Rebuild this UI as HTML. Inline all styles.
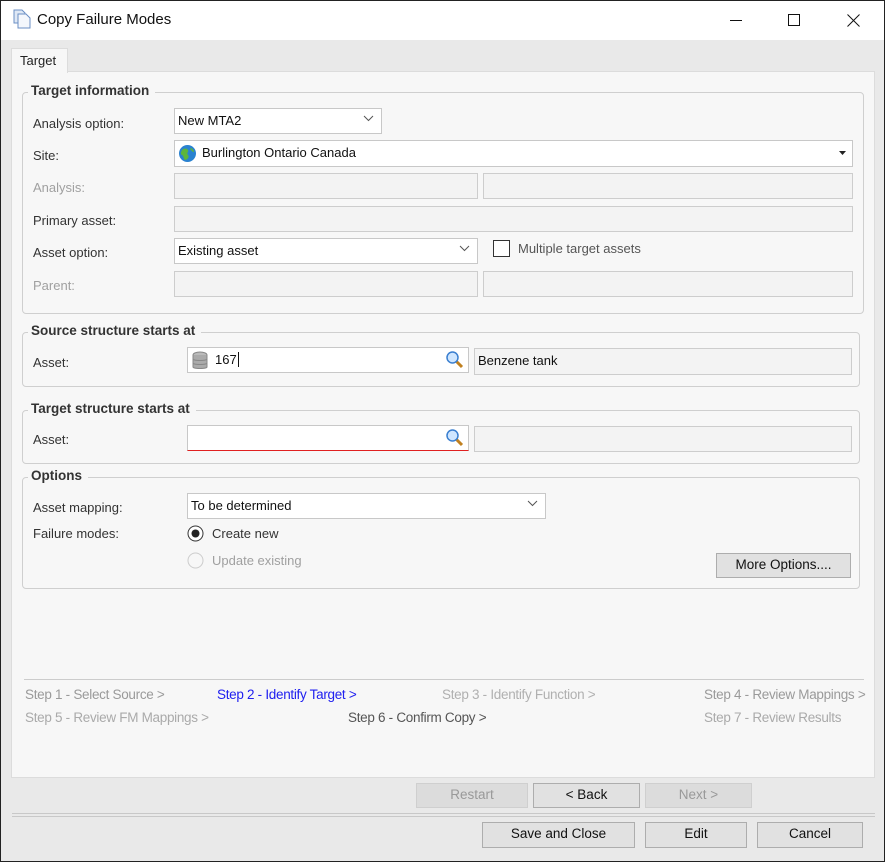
<!DOCTYPE html>
<html><head><meta charset="utf-8"><style>
*{box-sizing:border-box;margin:0;padding:0}
body{width:885px;height:862px;overflow:hidden;background:#e9e9e9;font-family:"Liberation Sans",sans-serif;font-size:13px;color:#222;position:relative}
.a{position:absolute}
.win{left:0;top:0;width:885px;height:862px;border:1px solid #222}
.title{left:1px;top:1px;width:883px;height:39px;background:#fff}
.panel{left:11px;top:71px;width:864px;height:707px;background:#f7f7f7;border:1px solid #dcdcdc}
.tab{left:11px;top:48px;width:57px;height:25px;background:#f7f7f7;border:1px solid #dcdcdc;border-bottom:none;padding:4px 0 0 8px;font-size:13px}
.grp{border:1px solid #cfcfcf;border-radius:4px}
.leg{font-weight:bold;background:#f7f7f7;padding:0 6px 0 3px;font-size:13.5px;color:#333}
.lbl{font-size:13px;color:#333}
.dis{color:#a0a0a0}
.in{background:#fff;border:1px solid #c8c8c8;padding:3px 3px;font-size:13px;color:#111;line-height:17px}
.ro{background:#f3f3f3;border:1px solid #cdcdcd}
.chev{position:absolute;right:6px;top:3px;width:13px;height:13px}
.step{font-size:13.5px;color:#9a9a9a;letter-spacing:-0.3px}
.btn{border:1px solid #adadad;background:#e1e1e1;text-align:center;font-size:13.5px;line-height:22px;color:#111}
.bd{color:#999;background:#dcdcdc;border-color:#cfcfcf}
</style></head><body>
<div class="a win"></div>
<div class="a title"></div>
<svg class="a" style="left:12px;top:9px" width="20" height="20" viewBox="0 0 20 20"><path d="M2 1h8l3 3v10H2z" fill="#dfe8f5" stroke="#6b8fc4"/><path d="M6 5h8l4 4v10H6z" fill="#f4f7fc" stroke="#6b8fc4"/></svg>
<div class="a" style="left:37px;top:11px;font-size:15px;color:#111">Copy Failure Modes</div>
<div class="a" style="left:730px;top:20px;width:12px;height:1px;background:#111"></div>
<div class="a" style="left:788px;top:14px;width:12px;height:12px;border:1px solid #111"></div>
<svg class="a" style="left:847px;top:14px" width="13" height="13"><path d="M0.5 0.5L12.5 12.5M12.5 0.5L0.5 12.5" stroke="#111"/></svg>

<div class="a panel"></div>
<div class="a tab">Target</div>

<!-- group 1 -->
<div class="a grp" style="left:22px;top:92px;width:842px;height:222px"></div>
<div class="a leg" style="left:28px;top:83px">Target information</div>
<div class="a lbl" style="left:33px;top:116px">Analysis option:</div>
<div class="a in" style="left:174px;top:108px;width:208px;height:26px">New MTA2<svg class="chev" viewBox="0 0 13 13"><path d="M2 4l4.5 4.5L11 4" fill="none" stroke="#555"/></svg></div>
<div class="a lbl" style="left:33px;top:148px">Site:</div>
<div class="a in" style="left:174px;top:140px;width:679px;height:27px;padding-left:27px">Burlington Ontario Canada</div>
<svg class="a" style="left:178px;top:144px" width="19" height="19" viewBox="0 0 19 19"><circle cx="9.5" cy="9.5" r="8.5" fill="#2a82d0"/><path d="M4 6c2-2 5-2 6 0s-2 3 0 5-1 5-3 5c-2-2-1-4-3-5s-1-3 0-5zM12 4c2 0 4 2 4 4-2 0-3-2-4-4z" fill="#5cb63c"/></svg>
<svg class="a" style="left:839px;top:151px" width="8" height="5"><path d="M0 0h7L3.5 4z" fill="#222"/></svg>
<div class="a lbl dis" style="left:33px;top:180px">Analysis:</div>
<div class="a in ro" style="left:174px;top:173px;width:304px;height:26px"></div>
<div class="a in ro" style="left:483px;top:173px;width:370px;height:26px"></div>
<div class="a lbl" style="left:33px;top:213px">Primary asset:</div>
<div class="a in ro" style="left:174px;top:206px;width:679px;height:26px"></div>
<div class="a lbl" style="left:33px;top:245px">Asset option:</div>
<div class="a in" style="left:174px;top:238px;width:304px;height:26px">Existing asset<svg class="chev" viewBox="0 0 13 13"><path d="M2 4l4.5 4.5L11 4" fill="none" stroke="#555"/></svg></div>
<div class="a" style="left:493px;top:240px;width:17px;height:17px;border:1px solid #333;background:#fff"></div>
<div class="a lbl" style="left:518px;top:241px;color:#555">Multiple target assets</div>
<div class="a lbl dis" style="left:33px;top:278px">Parent:</div>
<div class="a in ro" style="left:174px;top:271px;width:304px;height:26px"></div>
<div class="a in ro" style="left:483px;top:271px;width:370px;height:26px"></div>

<!-- group 2 -->
<div class="a grp" style="left:22px;top:332px;width:838px;height:55px"></div>
<div class="a leg" style="left:28px;top:323px">Source structure starts at</div>
<div class="a lbl" style="left:33px;top:355px">Asset:</div>
<div class="a in" style="left:187px;top:347px;width:282px;height:26px;padding-left:27px">167<span style="border-left:1px solid #111;margin-left:1px"></span></div>
<svg class="a" style="left:191px;top:351px" width="18" height="20" viewBox="0 0 18 20"><ellipse cx="9" cy="4" rx="7" ry="3" fill="#bbb" stroke="#888"/><path d="M2 4v12c0 2 14 2 14 0V4" fill="#aaa" stroke="#888"/><path d="M2 8c0 2 14 2 14 0M2 12c0 2 14 2 14 0" fill="none" stroke="#888"/></svg>
<svg class="a" style="left:445px;top:350px" width="20" height="20" viewBox="0 0 20 20"><path d="M11 11l6 6" stroke="#c08020" stroke-width="3"/><circle cx="7.5" cy="7.5" r="5.5" fill="#cfe6ff" stroke="#3a7fd0" stroke-width="1.5"/></svg>
<div class="a in ro" style="left:474px;top:348px;width:378px;height:27px">Benzene tank</div>

<!-- group 3 -->
<div class="a grp" style="left:22px;top:410px;width:838px;height:54px"></div>
<div class="a leg" style="left:28px;top:401px">Target structure starts at</div>
<div class="a lbl" style="left:33px;top:432px">Asset:</div>
<div class="a in" style="left:187px;top:425px;width:282px;height:26px;border-bottom:1px solid #e02020"></div>
<svg class="a" style="left:445px;top:428px" width="20" height="20" viewBox="0 0 20 20"><path d="M11 11l6 6" stroke="#c08020" stroke-width="3"/><circle cx="7.5" cy="7.5" r="5.5" fill="#cfe6ff" stroke="#3a7fd0" stroke-width="1.5"/></svg>
<div class="a in ro" style="left:474px;top:426px;width:378px;height:26px"></div>

<!-- group 4 -->
<div class="a grp" style="left:22px;top:477px;width:838px;height:112px"></div>
<div class="a leg" style="left:28px;top:468px">Options</div>
<div class="a lbl" style="left:33px;top:500px">Asset mapping:</div>
<div class="a in" style="left:187px;top:493px;width:359px;height:26px">To be determined<svg class="chev" viewBox="0 0 13 13"><path d="M2 4l4.5 4.5L11 4" fill="none" stroke="#555"/></svg></div>
<div class="a lbl" style="left:33px;top:526px">Failure modes:</div>
<svg class="a" style="left:187px;top:525px" width="17" height="17"><circle cx="8.5" cy="8.5" r="7.5" fill="#fff" stroke="#333"/><circle cx="8.5" cy="8.5" r="4" fill="#222"/></svg>
<div class="a lbl" style="left:212px;top:526px">Create new</div>
<svg class="a" style="left:187px;top:552px" width="17" height="17"><circle cx="8.5" cy="8.5" r="7.5" fill="#f7f7f7" stroke="#ccc"/></svg>
<div class="a lbl dis" style="left:212px;top:553px">Update existing</div>
<div class="a btn" style="left:716px;top:553px;width:135px;height:25px">More Options....</div>

<!-- steps -->
<div class="a" style="left:24px;top:679px;width:840px;height:1px;background:#ccc"></div>
<div class="a step" style="left:25px;top:687px">Step 1 - Select Source &gt;</div>
<div class="a step" style="left:217px;top:687px;color:#2020f0">Step 2 - Identify Target &gt;</div>
<div class="a step" style="left:442px;top:687px;color:#b0b0b0">Step 3 - Identify Function &gt;</div>
<div class="a step" style="left:704px;top:687px">Step 4 - Review Mappings &gt;</div>
<div class="a step" style="left:25px;top:710px;color:#aaa">Step 5 - Review FM Mappings &gt;</div>
<div class="a step" style="left:348px;top:710px;color:#555">Step 6 - Confirm Copy &gt;</div>
<div class="a step" style="left:704px;top:710px;color:#aaa">Step 7 - Review Results</div>

<!-- buttons -->
<div class="a btn bd" style="left:416px;top:783px;width:112px;height:25px">Restart</div>
<div class="a btn" style="left:533px;top:783px;width:107px;height:25px">&lt; Back</div>
<div class="a btn bd" style="left:645px;top:783px;width:107px;height:25px">Next &gt;</div>
<div class="a" style="left:12px;top:813px;width:863px;height:4px;border-top:1px solid #c8c8c8;border-bottom:1px solid #c8c8c8"></div>
<div class="a btn" style="left:482px;top:822px;width:153px;height:26px">Save and Close</div>
<div class="a btn" style="left:645px;top:822px;width:102px;height:26px">Edit</div>
<div class="a btn" style="left:757px;top:822px;width:106px;height:26px">Cancel</div>
</body></html>
